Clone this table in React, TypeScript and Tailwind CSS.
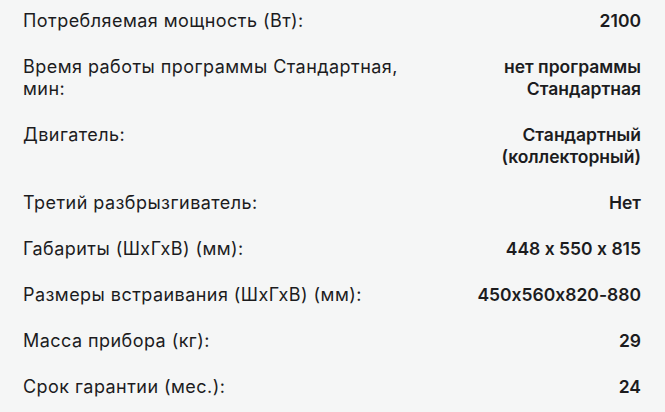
import React from "react";

const rows: [string, string][] = [
  ["Потребляемая мощность (Вт):", "2100"],
  ["Время работы программы Стандартная, мин:", "нет программы Стандартная"],
  ["Двигатель:", "Стандартный (коллекторный)"],
  ["Третий разбрызгиватель:", "Нет"],
  ["Габариты (ШхГхВ) (мм):", "448 x 550 x 815"],
  ["Размеры встраивания (ШхГхВ) (мм):", "450x560x820-880"],
  ["Масса прибора (кг):", "29"],
  ["Срок гарантии (мес.):", "24"],
];

export default function App() {
  return (
    <div
      className="w-[665px] h-[412px] overflow-hidden bg-[#f5f6f6] text-[#1c1c1e] pl-[23px] pr-[24px] pt-[10px] flex flex-col gap-6"
      style={{ fontFamily: "Inter, 'Noto Sans', sans-serif", fontFeatureSettings: "'calt' 0" }}
    >
      {rows.map(([k, v]) => (
        <div key={k} className="flex justify-between items-start leading-[22px]">
          <div className="w-[385px] text-[18px] tracking-[0.45px]">{k}</div>
          <div className="w-[180px] text-right text-[17.5px] font-semibold tracking-[0px]">{v}</div>
        </div>
      ))}
    </div>
  );
}
